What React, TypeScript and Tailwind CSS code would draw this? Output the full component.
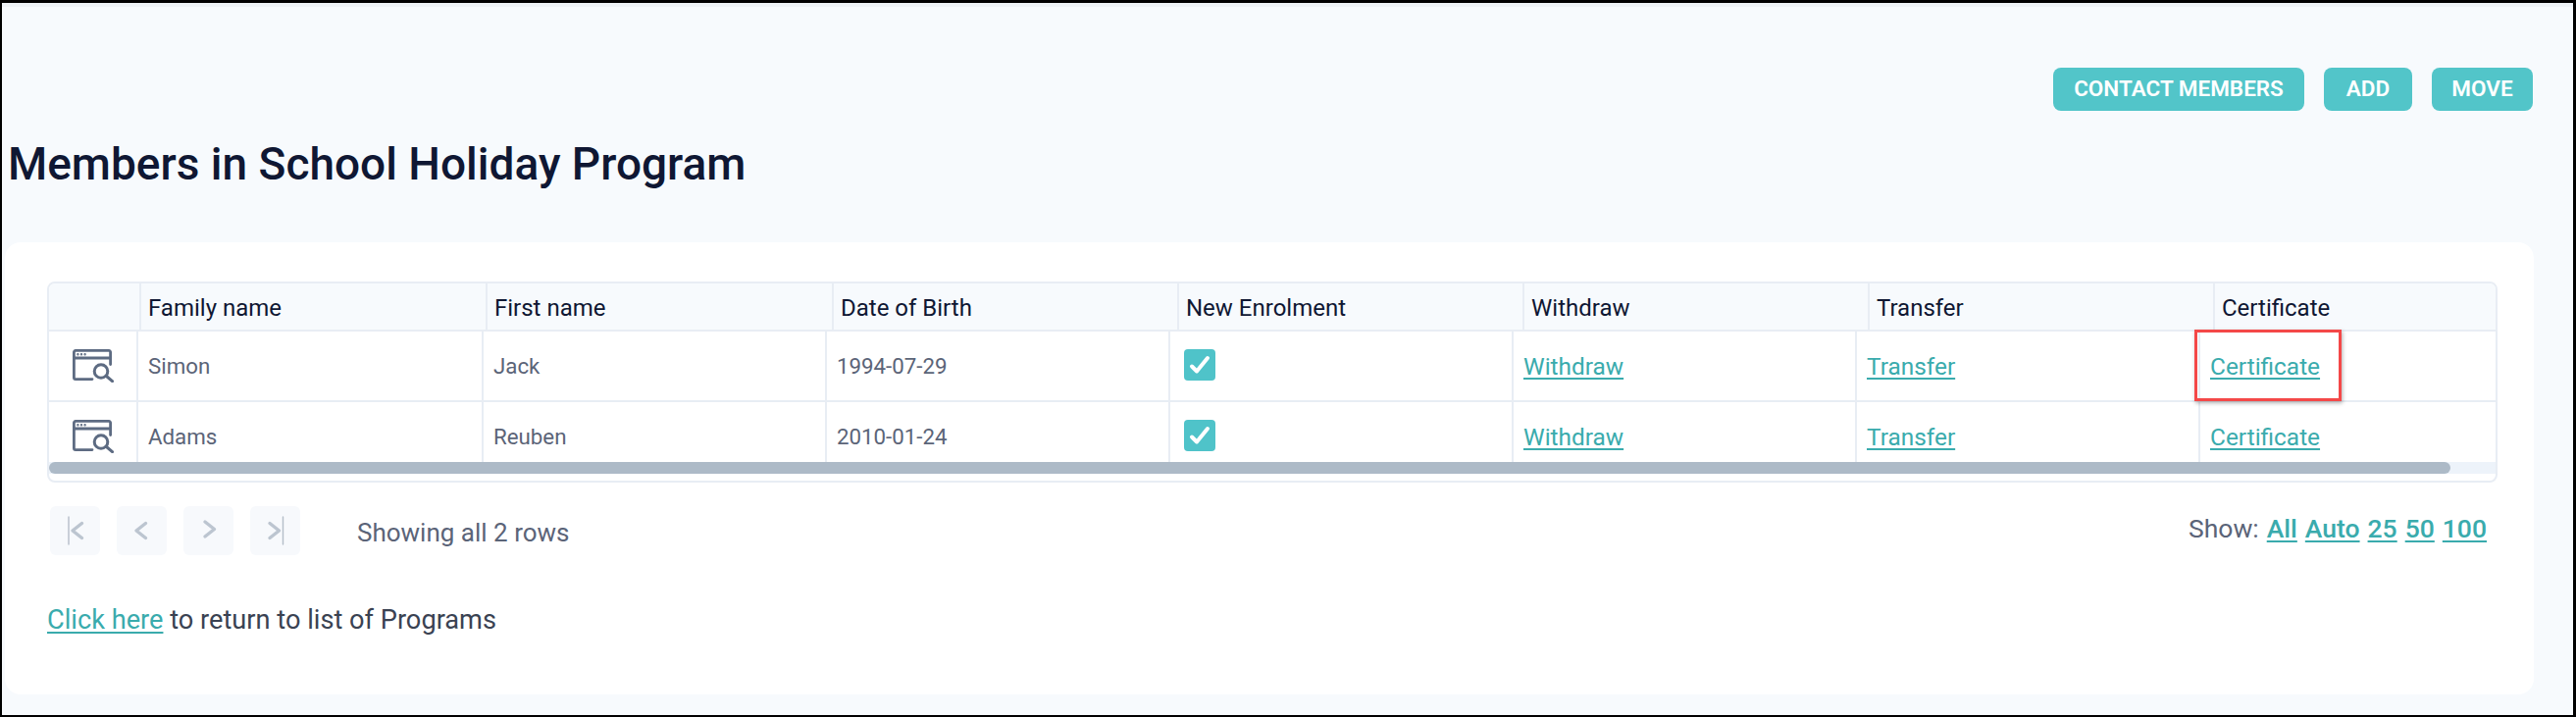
const headers = ["", "Family name", "First name", "Date of Birth", "New Enrolment", "Withdraw", "Transfer", "Certificate"];

const members = [
  { family: "Simon", first: "Jack", dob: "1994-07-29" },
  { family: "Adams", first: "Reuben", dob: "2010-01-24" },
];

const headerCols = "grid grid-cols-[94px_353px_353px_352px_352px_352px_352px_1fr]";
const rowCols = "grid grid-cols-[91px_352px_350px_350px_350px_350px_350px_1fr]";

const TableLink = ({ children }: { children: string }) => (
  <a href="#" className="text-[24.4px] text-[#3aabad] underline decoration-2 underline-offset-[3px]">
    {children}
  </a>
);

// Window with a magnifier over its corner
const ViewIcon = () => (
  <svg width={42} height={34} viewBox="0 0 42 34" fill="none" stroke="#5d6b82" strokeWidth={2.8} strokeLinecap="round">
    <path d="M20 30.6H3a1.6 1.6 0 0 1-1.6-1.6V3A1.6 1.6 0 0 1 3 1.4h34A1.6 1.6 0 0 1 38.6 3v12.5" />
    <path d="M1.4 9h37.2" />
    <circle cx={5.4} cy={5.2} r={0.5} strokeWidth={1.4} />
    <circle cx={9} cy={5.2} r={0.5} strokeWidth={1.4} />
    <circle cx={12.6} cy={5.2} r={0.5} strokeWidth={1.4} />
    <circle cx={29} cy={22.5} r={6.8} strokeWidth={3} />
    <path d="M34.5 27.5l6 5.2" strokeWidth={3} />
  </svg>
);

const CheckedBox = () => (
  <span className="flex h-8 w-8 items-center justify-center rounded-[4px] bg-[#4fc3c9]">
    <svg width={22} height={20} viewBox="0 0 22 20" fill="none" stroke="#ffffff" strokeWidth={4} strokeLinecap="round" strokeLinejoin="round">
      <path d="M3 11.5l5 5L19 3" />
    </svg>
  </span>
);

const PageButton = ({ d, bar }: { d: string; bar?: number }) => (
  <button className="flex h-[50px] w-[51px] items-center justify-center rounded-[6px] bg-[#f7f9fc]">
    <svg width={28} height={30} viewBox="0 0 28 30" fill="none" strokeLinecap="round" strokeLinejoin="round">
      {bar !== undefined && <path d={`M${bar} 1v28`} stroke="#b5bec9" strokeWidth={1.4} />}
      <path d={d} stroke="#bcc5d0" strokeWidth={3.4} />
    </svg>
  </button>
);

const App = () => {
  return (
    <div className="h-[731px] w-full border-t-[3px] border-r-[3px] border-b-[2px] border-l-[2px] border-black font-['Roboto',sans-serif]">
      <div className="h-full border-t-[4px] border-[#eef2f6] bg-[#f7fafd]">
        {/* Barra de ações */}
        <div className="flex justify-end gap-5 pt-[62px] pr-[41px]">
          <button className="h-11 w-[256px] rounded-lg bg-[#52c5c9] text-[22.5px] font-semibold text-white">CONTACT MEMBERS</button>
          <button className="h-11 w-[90px] rounded-lg bg-[#52c5c9] text-[22.5px] font-semibold text-white">ADD</button>
          <button className="h-11 w-[103px] rounded-lg bg-[#52c5c9] text-[22.5px] font-semibold text-white">MOVE</button>
        </div>

        <h1 className="mt-[22px] pl-[6px] text-[46px] leading-[64px] font-medium text-[#0f1733]">
          Members in School Holiday Program
        </h1>

        {/* Card principal */}
        <div className="mt-[48px] mr-[40px] ml-[3px] h-[461px] rounded-2xl bg-white pt-10 pr-[37px] pl-[43px]">
          <div className="relative overflow-hidden rounded-lg border-2 border-[#e8edf4]">
            <div className={`${headerCols} h-[49px] border-b-2 border-[#e8edf4] bg-[#f7fafd]`}>
              {headers.map((h) => (
                <div key={h} className="flex items-center border-r-2 border-[#e8edf4] pt-[2px] pl-[7px] text-[24px] text-[#0f1733] last:border-r-0">
                  {h}
                </div>
              ))}
            </div>

            <div className="h-[133px] overflow-hidden">
              {members.map((m) => (
                <div key={m.family} className={`${rowCols} h-[72px] border-b-2 border-[#e8edf4]`}>
                  <div className="flex items-center justify-center border-r-2 border-[#e8edf4]">
                    <ViewIcon />
                  </div>
                  <div className="flex items-center border-r-2 border-[#e8edf4] pt-[2px] pl-[10px] text-[22.3px] text-[#5b6478]">{m.family}</div>
                  <div className="flex items-center border-r-2 border-[#e8edf4] pt-[2px] pl-[10px] text-[22.3px] text-[#5b6478]">{m.first}</div>
                  <div className="flex items-center border-r-2 border-[#e8edf4] pt-[2px] pl-[10px] text-[22.3px] text-[#5b6478]">{m.dob}</div>
                  <div className="flex items-center border-r-2 border-[#e8edf4] pb-[2px] pl-[14px]">
                    <CheckedBox />
                  </div>
                  <div className="flex items-center border-r-2 border-[#e8edf4] pt-[2px] pl-[10px]">
                    <TableLink>Withdraw</TableLink>
                  </div>
                  <div className="flex items-center border-r-2 border-[#e8edf4] pt-[2px] pl-[10px]">
                    <TableLink>Transfer</TableLink>
                  </div>
                  <div className="flex items-center pt-[2px] pl-[10px]">
                    <TableLink>Certificate</TableLink>
                  </div>
                </div>
              ))}
            </div>

            {/* Barra de rolagem */}
            <div className="h-3 bg-[#edf3fa]">
              <div className="h-full w-[2448px] rounded-full bg-[#adbac7]" />
            </div>
            <div className="h-[7px]" />

            {/* Destaque em vermelho */}
            <div className="absolute top-[47px] left-[2187px] h-[73px] w-[150px] border-[3px] border-[#f44848] shadow-[1px_2px_4px_rgba(0,0,0,0.3)]" />
          </div>

          {/* Paginação */}
          <div className="mt-6 flex items-start">
            <div className="ml-[3px] flex gap-[17px]">
              <PageButton d="M20.5 7.5l-9.5 7.5 9.5 7.5" bar={7} />
              <PageButton d="M17.5 7.5l-9.5 7.5 9.5 7.5" />
              <PageButton d="M10 6l9.5 7.5-9.5 7.5" />
              <PageButton d="M8 7.5l9.5 7.5-9.5 7.5" bar={21.5} />
            </div>
            <span className="mt-[8px] ml-[58px] text-[26px] text-[#5b6478]">Showing all 2 rows</span>
            <div className="mt-[3px] ml-auto flex items-center gap-[8px] pr-[11px] text-[26.5px]">
              <span className="text-[#5b6478]">Show:</span>
              <a href="#" className="font-medium text-[#3aabad] underline decoration-2 underline-offset-[3px]">All</a>
              <a href="#" className="font-medium text-[#3aabad] underline decoration-2 underline-offset-[3px]">Auto</a>
              <a href="#" className="font-medium text-[#3aabad] underline decoration-2 underline-offset-[3px]">25</a>
              <a href="#" className="font-medium text-[#3aabad] underline decoration-2 underline-offset-[3px]">50</a>
              <a href="#" className="font-medium text-[#3aabad] underline decoration-2 underline-offset-[3px]">100</a>
            </div>
          </div>

          <p className="mt-[46px] text-[27.2px] text-[#3a4252]">
            <a href="#" className="text-[#3aabad] underline decoration-2 underline-offset-[3px]">Click here</a> to return to list of Programs
          </p>
        </div>
      </div>
    </div>
  );
};

export default App;
